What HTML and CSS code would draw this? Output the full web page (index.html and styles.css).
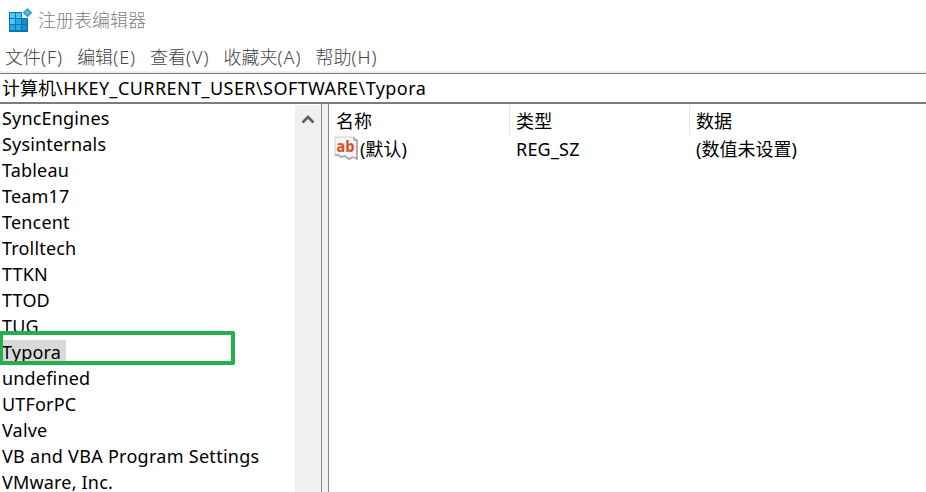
FILE: index.html
```html
<!DOCTYPE html>
<html lang="zh-CN">
<head>
<meta charset="utf-8">
<title>注册表编辑器</title>
<link rel="stylesheet" href="styles.css">
</head>
<body>
<div class="window">
  <header class="titlebar">
    <svg class="app-icon" width="26" height="25" viewBox="0 0 26 25">
      <path fill="#0878ae" d="M1 4h13v6h6v14H1z"/>
      <path fill="#4cc8f8" d="M2 5h5v5H2zM8 5h5v5H8zM2 11h5v5H2z"/>
      <path fill="#25a9e2" d="M8 11h5v5H8zM2 17h5v5H2zM8 17h5v5H8z"/>
      <path fill="#168fca" d="M14 11h5v5h-5zM14 17h5v5h-5z"/>
      <path fill="#3a9fcb" d="M19.500 0l4.800 4.800-4.800 4.800-4.800-4.800z"/>
      <path fill="#68c9ed" d="M19.500 2.800l2 2-2 2-2-2z"/>
    </svg>
    <span class="title">注册表编辑器</span>
  </header>
  <nav class="menu">
    <span>文件<b>(F)</b></span><span>编辑<b>(E)</b></span><span>查看<b>(V)</b></span><span>收藏夹<b>(A)</b></span><span>帮助<b>(H)</b></span>
  </nav>
  <div class="address">计算机<span class="path">\HKEY_CURRENT_USER\SOFTWARE\Typora</span></div>
  <main class="panes">
    <section class="tree">
      <ul class="keys">
        <li>SyncEngines</li>
        <li>Sysinternals</li>
        <li>Tableau</li>
        <li>Team17</li>
        <li>Tencent</li>
        <li>Trolltech</li>
        <li>TTKN</li>
        <li>TTOD</li>
        <li>TUG</li>
        <li><span class="selected">Typora</span><i class="marker"></i></li>
        <li>undefined</li>
        <li>UTForPC</li>
        <li>Valve</li>
        <li class="spaced">VB and VBA Program Settings</li>
        <li>VMware, Inc.</li>
      </ul>
      <div class="scrollbar">
        <svg width="14" height="10" viewBox="0 0 14 10"><path d="M1.500 8.500L7 3l5.500 5.500" fill="none" stroke="#606060" stroke-width="2.800"/></svg>
      </div>
    </section>
    <div class="splitter"></div>
    <section class="values">
      <div class="row head"><span>名称</span><span>类型</span><span>数据</span></div>
      <div class="row">
        <span class="name"><svg width="25" height="25" viewBox="0 0 25 25">
          <path d="M1 1h19l3 3v19l-4-2-4 2-4-3-4 1-3-2H1z" fill="#f5f5f5" stroke="#cdcdcd"/>
          <path d="M20 1v3h3v19l-3-2M1 19h3l3 2 4-1 4 3 4-2" fill="none" stroke="#a0a0a0" stroke-width="1.500"/>
          <text x="2.500" y="15.500" textLength="18" lengthAdjust="spacingAndGlyphs" class="ab">ab</text>
        </svg>(默认)</span>
        <span>REG_SZ</span>
        <span>(数值未设置)</span>
      </div>
    </section>
  </main>
</div>
</body>
</html>
```
FILE: styles.css
```css
* { box-sizing: border-box; }
body {
  margin: 0;
  background: #fff;
  color: #000;
  font: 18px/26px "Noto Sans", "Noto Sans CJK SC", sans-serif;
}
.window { width: 926px; height: 492px; display: flex; flex-direction: column; overflow: hidden; }
.titlebar { height: 40px; display: flex; align-items: center; padding: 0 0 0 8px; color: #808080; }
.title { margin-top: -2px; }
.app-icon { margin-right: 4px; }
.titlebar, .menu { flex: none; font-family: "Noto Sans CJK SC", sans-serif; font-weight: 300; }
.menu { height: 31px; display: flex; align-items: center; gap: 14px; padding: 1px 0 0 5px; color: #444; }
.menu b { font-family: "Noto Sans", sans-serif; font-weight: 300; letter-spacing: 1px; }
.address {
  flex: none;
  height: 31px;
  margin-top: 2px;
  padding: 1px 0 0 2px;
  border-top: 1px solid #77777b;
  border-bottom: 2px solid #7b7c82;
  box-shadow: 0 -2px #f2f2f2;
  white-space: nowrap;
}
.path { letter-spacing: .43px; }
.panes { flex: 1; min-height: 0; display: flex; }
.tree { width: 322px; flex: none; display: flex; border-right: 1px solid #828790; }
.keys { margin: 0; padding: 1px 0 0 2px; list-style: none; width: 295px; white-space: nowrap; letter-spacing: .18px; }
.keys .spaced { letter-spacing: .28px; }
.keys li { position: relative; height: 26px; }
.selected { display: inline-block; height: 24px; line-height: 24px; margin-top: 1px; padding-right: 5px; background: #d9d9d9; }
.marker { position: absolute; left: -3px; top: -8px; width: 236px; height: 34px; border: 4px solid #22b14c; border-radius: 2px; }
.scrollbar { width: 26px; background: #f0f0f0; padding: 9px 0 0 6px; border-top: 1px solid #fff; line-height: 0; }
.splitter { width: 7px; flex: none; background: #f0f0f0; border-right: 1px solid #828790; }
.values { flex: 1; padding-top: 1px; }
.row { display: flex; height: 30px; }
.row > span { flex: none; width: 180px; padding: 1px 0 0 6px; line-height: 26px; white-space: nowrap; }
.row > span:first-child { width: 181px; padding-left: 7px; }
.row > span:nth-child(2) { letter-spacing: .2px; }
.head > span { padding-top: 3px; border-right: 1px solid #e5e5e5; }
.head > span:last-child { border: 0; }
.row > .name:first-child { display: flex; padding-left: 5px; }
.name svg { margin-right: 1px; }
.ab { font: 700 15px "DejaVu Sans", sans-serif; fill: #d9512f; }
```
